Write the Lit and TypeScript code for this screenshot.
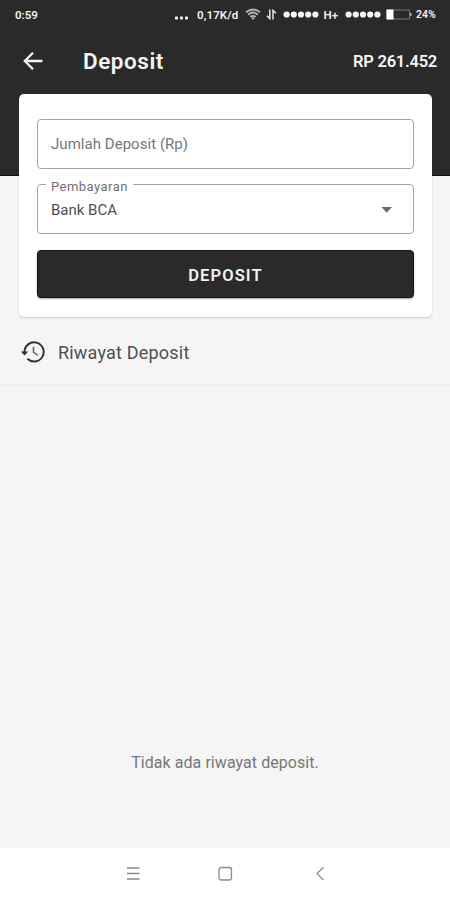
import { LitElement, html, css, svg } from "lit";
import { customElement } from "lit/decorators.js";

const dots = [0, 1, 2, 3, 4];

@customElement("status-bar")
class StatusBar extends LitElement {
  static styles = css`
    :host { display: flex; align-items: center; height: 29px; padding: 0 10px 0 15px; color: #f2f2f2; font-size: 11.5px; font-weight: 600; line-height: 14px; white-space: nowrap; }
    .time { width: 160px; flex: none; letter-spacing: 0; }
    .rate { width: 42px; flex: none; margin-left: 8px; letter-spacing: 0.1px; }
    .net { width: 15px; flex: none; margin-left: 4.5px; }
    .pct { margin-left: 4px; font-size: 10.5px; letter-spacing: 0; }
    svg { display: block; flex: none; }
    .wifi { margin-left: 6px; }
    .arrows { margin-left: 5px; }
    .signal { margin-left: 6px; }
    .second { margin-left: 6px; }
    .battery { margin-left: 5.5px; }
  `;
  signal(cls: string) {
    return html`<svg class=${cls} width="36" height="14" fill="#f5f5f5">
      ${dots.map((i) => svg`<circle cx=${3.6 + i * 7.2} cy="6.5" r="3.1"></circle>`)}
    </svg>`;
  }
  render() {
    return html`
      <span class="time">0:59</span>
      <svg width="14" height="14" fill="#f2f2f2"><rect x="0" y="8.500" width="3" height="3" rx=".7"/><rect x="5" y="8.500" width="3" height="3" rx=".7"/><rect x="10" y="8.500" width="3" height="3" rx=".7"/></svg>
      <span class="rate">0,17K/d</span>
      <svg class="wifi" width="16" height="14" fill="none" stroke="#b5b5b5" stroke-width="1.9"><path d="M1 4.300Q8 -1.300 15 4.300M3.200 6.700Q8 2.500 12.800 6.700M5.400 9Q8 6.800 10.600 9"/><path d="M6.300 9.700h3.400L8 11.900Z" fill="#c8c8c8" stroke="none"/></svg>
      <svg class="arrows" width="11" height="14" fill="none" stroke="#e5e5e5" stroke-width="1.5"><path d="M3.800 1.500v9L1 7.900M7 11.500V2.500l2.800 2.600"/></svg>
      ${this.signal("signal")}
      <span class="net">H+</span>
      ${this.signal("signal second")}
      <svg class="battery" width="26" height="14"><rect x="1" y="2" width="22.500" height="9" rx=".5" fill="none" stroke="#777"/><rect x=".5" y="1.500" width="7" height="10" fill="#fff"/><path d="M24 4.700q1.800 0 1.800 1.800t-1.800 1.800Z" fill="#aaa"/></svg>
      <span class="pct">24%</span>`;
  }
}

@customElement("form-field")
class FormField extends LitElement {
  static properties = { label: {}, value: {} };
  declare label: string;
  declare value: string;
  static styles = css`
    :host { display: block; position: relative; box-sizing: border-box; height: 50px; border: 1px solid #a4a4a4; border-radius: 4px; }
    .row { display: flex; align-items: center; justify-content: space-between; height: 48px; padding: 0 20px 0 13px; font-size: 15px; color: #777; letter-spacing: 0.04px; }
    .filled { height: 50px; color: #505050; font-size: 15px; letter-spacing: 0; }
    .label { position: absolute; left: 8px; top: -6.5px; padding: 0 5px; background: #fff; color: #707070; font-size: 13px; line-height: 16px; letter-spacing: 0.46px; }
  `;
  render() {
    return this.value
      ? html`<span class="label">${this.label}</span>
          <div class="row filled"><span>${this.value}</span>
            <svg width="12" height="6" fill="#6a6a6a"><path d="M.5 0h10.500L5.700 5.700Z"/></svg></div>`
      : html`<div class="row">${this.label}</div>`;
  }
}

@customElement("app-root")
class AppRoot extends LitElement {
  static styles = css`
    :host { display: flex; flex-direction: column; height: 900px; box-sizing: border-box; overflow: hidden; background: #f5f5f5; font-family: Roboto, "Liberation Sans", sans-serif; }
    .top { height: 176px; flex: none; background: #2a2a2a; border-bottom: 1px solid #111; box-sizing: border-box; }
    .bar { display: flex; align-items: center; height: 65px; padding: 0 13px 0 22px; color: #f5f5f5; }
    .title { margin: -2px 0 0 39px; flex: 1; font-size: 22.500px; font-weight: 600; line-height: 30px; letter-spacing: 0.55px; }
    .balance { margin-top: -1px; font-size: 16.500px; font-weight: 600; letter-spacing: -0.25px; }
    .card { position: relative; margin: -82px 18px 0 19px; height: 223px; box-sizing: border-box; padding: 25px 18px 0; display: flex; flex-direction: column; background: #fff; border-radius: 5px; box-shadow: 0 1px 2px rgba(0, 0, 0, 0.18); flex: none; }
    .second { margin-top: 15px; }
    .button { margin-top: 16px; height: 48px; border: 1px solid #151515; box-sizing: border-box; border-radius: 4px; background: #2a2a2a; color: #f2f2f2; font: 600 16.500px Roboto, sans-serif; letter-spacing: 1.1px; box-shadow: 0 1px 2px rgba(0, 0, 0, 0.35); padding: 3px 0 0; }
    .history { display: flex; align-items: center; flex: none; height: 68px; box-sizing: border-box; padding: 3px 20px 0; gap: 12px; border-bottom: 1px solid #eee; font-size: 18px; color: #505050; letter-spacing: 0.2px; }
    .empty { flex: 1; display: flex; align-items: flex-end; justify-content: center; padding-bottom: 75px; font-size: 16px; line-height: 20px; letter-spacing: 0.06px; color: #777; }
    .nav { height: 52px; flex: none; display: flex; align-items: center; justify-content: space-between; padding: 0 125px 0 125px; box-sizing: border-box; background: #fff; }
    svg { display: block; flex: none; }
  `;
  render() {
    return html`
      <header class="top">
        <status-bar></status-bar>
        <div class="bar">
          <svg width="22" height="22" fill="none" stroke="#f2f2f2" stroke-width="2.300"><path d="M20.500 10H3M11 1.800L2.800 10L11 18.200"/></svg>
          <h1 class="title">Deposit</h1>
          <span class="balance">RP 261.452</span>
        </div>
      </header>
      <section class="card">
        <form-field label="Jumlah Deposit (Rp)"></form-field>
        <form-field class="second" label="Pembayaran" value="Bank BCA"></form-field>
        <button class="button">DEPOSIT</button>
      </section>
      <div class="history">
        <svg width="26" height="24" viewBox="0 0 26 24" fill="none" stroke="#333" stroke-width="2"><path d="M4.500 12A9.600 9.600 0 1 1 7.400 18.800"/><path d="M.8 11.500h7.400L4.500 15.500Z" fill="#333" stroke="none"/><path d="M13.500 6.800v5.600l4.400 2.700" stroke="#666" stroke-width="1.600"/></svg>
        <span>Riwayat Deposit</span>
      </div>
      <div class="empty">Tidak ada riwayat deposit.</div>
      <nav class="nav">
        <svg width="16" height="16" fill="none" stroke="#8c8c8c" stroke-width="1.300"><path d="M2 2h12.500M2 7.500h12.500M2 13h12.500"/></svg>
        <svg width="16" height="16" fill="none" stroke="#8c8c8c" stroke-width="1.300"><rect x="2" y="1.500" width="12.500" height="12.500" rx="2.500"/></svg>
        <svg width="16" height="16" fill="none" stroke="#8c8c8c" stroke-width="1.300"><path d="M14.500 1.200L8 7.600l6.500 6.400"/></svg>
      </nav>`;
  }
}
